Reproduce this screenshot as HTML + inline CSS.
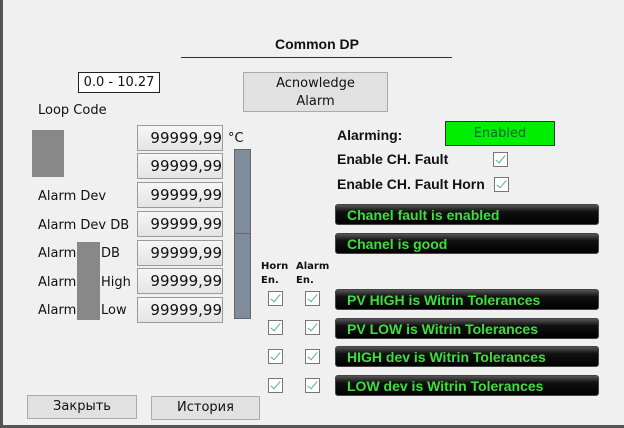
<!DOCTYPE html><html><head><style>
body{margin:0;width:624px;height:428px;background:#f0f0f0;position:relative;overflow:hidden;font-family:"DejaVu Sans","Liberation Sans",sans-serif;color:#111}
.a{position:absolute}
.v{position:absolute;left:137px;width:84px;height:24px;border:1px solid #9a9a9a;background:linear-gradient(#f6f6f6,#e4e4e4);font-size:15px;text-align:right;line-height:25px;box-sizing:content-box}
.l{position:absolute;font-size:13px}
.b{position:absolute;left:335px;width:264px;height:21px;border-radius:3px;background:linear-gradient(#555 0,#111 35%,#000 100%);color:#3be03b;font-weight:bold;font-size:14px;line-height:20px;padding-left:11px;box-sizing:border-box;border:1px solid #444;font-family:"Liberation Sans",sans-serif}
.c{position:absolute;width:15px;height:15px;border:1px solid #777;background:#fff;box-sizing:border-box}
.c:after{content:"";position:absolute;left:4px;top:0px;width:4px;height:9px;border:solid #5aa;border-width:0 1.5px 1.5px 0;transform:rotate(40deg)}
.btn{position:absolute;border:1px solid #aaa;background:#e1e1e1;font-size:13px;text-align:center}
.bl{font-weight:bold;font-size:14px;position:absolute;font-family:"Liberation Sans",sans-serif}
</style></head><body>
<div class="a" style="left:0;top:0;width:3px;height:428px;background:#555"></div>
<div class="a" style="left:0;top:425px;width:624px;height:3px;background:#555"></div>
<div class="bl" style="left:275px;top:36px">Common DP</div>
<div class="a" style="left:181px;top:57px;width:271px;height:1px;background:#333"></div>
<div class="a" style="left:78px;top:72px;width:80px;height:19px;border:1px solid #222;background:#fff;font-size:13px;text-align:center;line-height:19px">0.0 - 10.27</div>
<div class="l" style="left:38px;top:103px">Loop Code</div>
<div class="a" style="left:32px;top:130px;width:32px;height:47px;background:#888"></div>
<div class="v" style="top:125px">99999,99</div>
<div class="v" style="top:153px">99999,99</div>
<div class="v" style="top:182px">99999,99</div>
<div class="v" style="top:211px">99999,99</div>
<div class="v" style="top:240px">99999,99</div>
<div class="v" style="top:268px">99999,99</div>
<div class="v" style="top:297px">99999,99</div>
<div class="l" style="left:38px;top:189px">Alarm Dev</div>
<div class="l" style="left:38px;top:218px">Alarm Dev DB</div>
<div class="l" style="left:38px;top:246px">Alarm</div><div class="l" style="left:101px;top:246px">DB</div>
<div class="l" style="left:38px;top:275px">Alarm</div><div class="l" style="left:101px;top:275px">High</div>
<div class="l" style="left:38px;top:303px">Alarm</div><div class="l" style="left:101px;top:303px">Low</div>
<div class="a" style="left:77px;top:242px;width:23px;height:78px;background:#888"></div>
<div class="l" style="left:228px;top:131px">°C</div>
<div class="a" style="left:234px;top:149px;width:17px;height:170px;background:#7f8c9b;border:1px solid #666;box-sizing:border-box"></div>
<div class="a" style="left:234px;top:233px;width:17px;height:1px;background:#667"></div>
<div class="btn" style="left:243px;top:72px;width:145px;height:40px;line-height:18px;padding-top:2px;box-sizing:border-box">Acnowledge<br>Alarm</div>
<div class="bl" style="left:337px;top:127px">Alarming:</div>
<div class="a" style="left:445px;top:121px;width:110px;height:25px;background:#00ee00;border:1px solid #333;box-sizing:border-box;text-align:center;font-size:13px;line-height:23px;color:#063">Enabled</div>
<div class="bl" style="left:337px;top:151px">Enable CH. Fault</div>
<div class="c" style="left:493px;top:152px"></div>
<div class="bl" style="left:337px;top:176px">Enable CH. Fault Horn</div>
<div class="c" style="left:494px;top:177px"></div>
<div class="b" style="top:204px">Chanel fault is enabled</div>
<div class="b" style="top:233px">Chanel is good</div>
<div class="b" style="top:289px">PV HIGH is Witrin Tolerances</div>
<div class="b" style="top:318px">PV LOW is Witrin Tolerances</div>
<div class="b" style="top:346px">HIGH dev is Witrin Tolerances</div>
<div class="b" style="top:375px">LOW dev is Witrin Tolerances</div>
<div class="a" style="left:261px;top:260px;font-size:10px;font-weight:bold;line-height:14px">Horn<br>En.</div>
<div class="a" style="left:296px;top:260px;font-size:10px;font-weight:bold;line-height:14px">Alarm<br>En.</div>
<div class="c" style="left:268px;top:291px"></div><div class="c" style="left:305px;top:291px"></div>
<div class="c" style="left:268px;top:320px"></div><div class="c" style="left:305px;top:320px"></div>
<div class="c" style="left:268px;top:349px"></div><div class="c" style="left:305px;top:349px"></div>
<div class="c" style="left:268px;top:378px"></div><div class="c" style="left:305px;top:378px"></div>
<div class="btn" style="left:27px;top:395px;width:108px;height:22px;line-height:22px">Закрыть</div>
<div class="btn" style="left:151px;top:396px;width:107px;height:22px;line-height:22px">История</div>
</body></html>
